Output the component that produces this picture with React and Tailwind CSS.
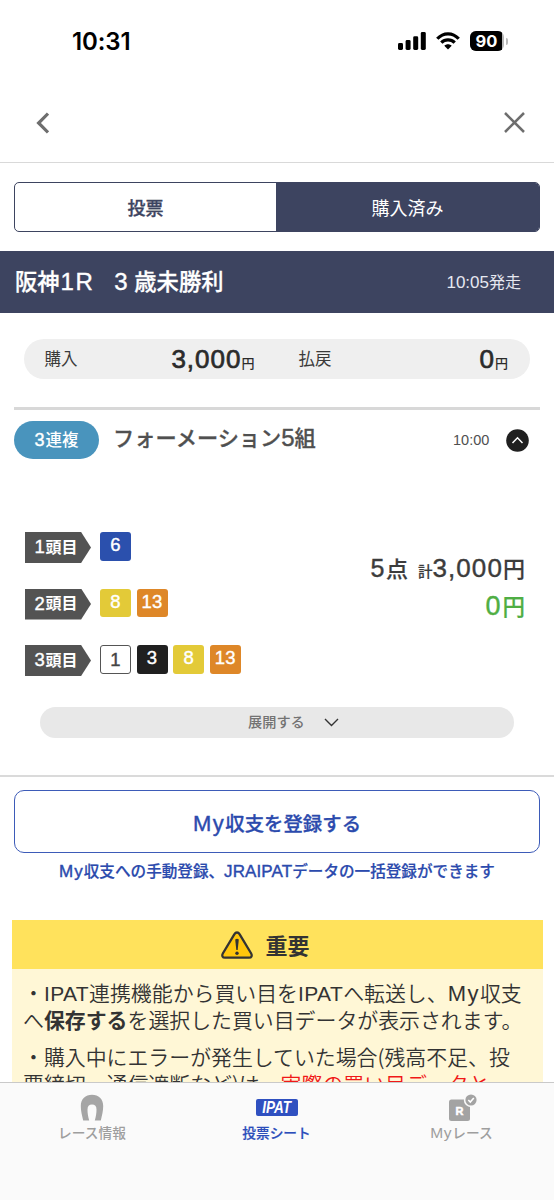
import React from "react";

const SANS = "font-['Liberation_Sans','Noto_Sans_CJK_JP',sans-serif]";

function StatusBar() {
  return (
    <div className="flex h-[82px] items-center justify-between pl-[72px] pr-[46px] text-black">
      <span className="pt-[1px] font-['Inter',sans-serif] text-[24px] font-semibold leading-none tracking-[-0.1px]">10:31</span>
      <div className="flex items-center">
        <svg width="28" height="20" viewBox="0 0 28 20" fill="currentColor">
          <rect x="0" y="12" width="5" height="7" rx="1.4" />
          <rect x="7.6" y="9" width="5" height="10" rx="1.4" />
          <rect x="15.2" y="5.3" width="5" height="13.7" rx="1.4" />
          <rect x="22.8" y="1" width="5" height="18" rx="1.4" />
        </svg>
        <svg className="ml-[10px]" width="24" height="20" viewBox="0 0 24 20" fill="none" stroke="currentColor" strokeWidth="3.2">
          <path d="M1.3 7.8 C7.3 1.1 16.7 1.1 22.7 7.8" />
          <path d="M5.3 11.7 C9 7.9 15 7.9 18.7 11.7" />
          <path d="M8.3 14.8 C10.4 12.8 13.6 12.8 15.7 14.8 L12 18.6 Z" fill="currentColor" stroke="none" />
        </svg>
        <div className="ml-[10px] flex h-5 w-[34px] items-center overflow-hidden rounded-[6px] bg-[#b9b9b9]">
          <div className="flex h-5 w-[32px] items-center justify-center bg-black pl-[1px]">
            <span className="font-['Inter',sans-serif] text-[16.5px] font-bold leading-none text-white">90</span>
          </div>
        </div>
        <div className="ml-[2px] h-[7px] w-[2px] rounded-r bg-[#b9b9b9]" />
      </div>
    </div>
  );
}

function Header() {
  return (
    <div className="flex h-[81px] items-center justify-between border-b-[1.5px] border-[#d9d9d9] pl-[36px] pr-[29px] pt-[1.5px] text-[#6e6e6e]">
      <svg width="13" height="22" viewBox="0 0 13 22" fill="none" stroke="currentColor" strokeWidth="3.2">
        <path d="M12 1.6 L2.600 11 L12 20.400" />
      </svg>
      <svg width="21" height="21" viewBox="0 0 21 21" fill="none" stroke="currentColor" strokeWidth="2.5">
        <path d="M1 1 L20 20 M20 1 L1 20" />
      </svg>
    </div>
  );
}

function Num({ children, className = "" }) {
  return (
    <span className={`font-['Liberation_Sans',sans-serif] font-normal leading-none [-webkit-text-stroke:0.4px_currentColor] ${className}`}>
      {children}
    </span>
  );
}

const COLORS = {
  white: "bg-white border border-[#555] text-[#444] pt-[1px]",
  black: "bg-[#202020] text-white pb-[2px]",
  blue: "bg-[#2b50ad] text-white pb-[2px]",
  yellow: "bg-[#e3ca38] text-white pb-[2px]",
  orange: "bg-[#de8728] text-white pb-[2px]",
};

function Horse({ n, color }) {
  return (
    <span className={`flex h-[28.5px] w-[31px] items-center justify-center rounded-[3px] ${COLORS[color]}`}>
      <Num className="text-[18.5px] tracking-[0.3px]">{n}</Num>
    </span>
  );
}

function Row({ label, horses }) {
  return (
    <div className="flex h-[31px] items-start gap-[9px]">
      <div className="flex h-[31px] w-[66px] items-center bg-[#535353] pl-[9px] text-[16px] leading-none text-white [clip-path:polygon(0_0,85%_0,100%_50%,85%_100%,0_100%)]">
        <Num className="w-[11.5px] text-center text-[18.5px]">{label}</Num>
        <span className="font-bold">頭目</span>
      </div>
      <div className="flex gap-[5.6px]">
        {horses.map(([n, c]) => (
          <Horse key={n} n={n} color={c} />
        ))}
      </div>
    </div>
  );
}

function BottomNav() {
  return (
    <nav className="flex h-[118px] shrink-0 border-t-[1.5px] border-[#c9c9c9] bg-[#fafafa] pt-[11px] text-[13.7px] font-medium leading-none text-[#9e9e9e]">
      <div className="flex w-[184px] flex-col items-center">
        <svg width="24" height="28" viewBox="0 0 24 28" fill="#a5a5a5">
          <path d="M3.2 26.500 C2 21.500 .8 17 .8 12 C.8 5 5.500 .8 12 .8 S23.200 5 23.200 12 C23.200 17 22 21.500 20.800 26.500 H14.800 C16 22.500 16.500 19 16.500 15.500 C16.500 12.200 15 10.500 12 10.500 S7.500 12.200 7.500 15.500 C7.500 19 8 22.500 9.200 26.500 Z" />
        </svg>
        <span className="mt-[5px]">レース情報</span>
      </div>
      <div className="flex w-[185px] flex-col items-center text-[#2b4dba]">
        <div className="mt-[5px] flex h-[17px] w-[42px] items-center justify-center rounded-[2px] bg-[#2f50c0] font-bold italic leading-none text-white">
          <span className="scale-x-[0.82] text-[16.5px]">IPAT</span>
        </div>
        <span className="mt-[11px] [-webkit-text-stroke:0.2px_currentColor]">投票シート</span>
      </div>
      <div className="flex w-[185px] flex-col items-center">
        <svg className="ml-px" width="30" height="28" viewBox="0 0 30 28">
          <rect x="2" y="5.500" width="21" height="21.500" rx="2.500" fill="#a3a3a3" />
          <circle cx="24" cy="6" r="7.200" fill="#fafafa" />
          <circle cx="24" cy="6" r="5.600" fill="#a3a3a3" />
          <path d="M21.300 6 L23.300 8 L26.800 4" fill="none" stroke="#fff" strokeWidth="1.600" />
          <text x="12.500" y="20.500" textAnchor="middle" fill="#fff" stroke="#fff" strokeWidth=".5" fontFamily="Liberation Sans" fontWeight="bold" fontSize="11">R</text>
        </svg>
        <span className="mt-[3px] flex items-baseline"><span className="text-[15.500px] tracking-[0.6px]">My</span>レース</span>
      </div>
    </nav>
  );
}

export default function App() {
  return (
    <div className={`flex h-[1200px] w-[554px] flex-col overflow-hidden bg-white ${SANS}`}>
      <div className="min-h-0 flex-1 overflow-hidden">
        <StatusBar />
        <Header />

        <div className="mx-[14px] mt-[19px] flex h-[50px] overflow-hidden rounded-[5px] border-[1.5px] border-[#3d4460] text-[18px] leading-none">
          <div className="flex w-[261px] items-center justify-center pt-[3px] font-medium text-[#3d4460] [-webkit-text-stroke:0.3px_currentColor]">投票</div>
          <div className="flex flex-1 items-center justify-center bg-[#3d4460] pt-[3px] text-white">購入済み</div>
        </div>

        <div className="mt-[19px] flex h-[62px] items-center justify-between bg-[#3d4460] pl-[15px] pr-[33px] text-white">
          <div className="flex items-baseline text-[22.300px] font-medium leading-none [-webkit-text-stroke:0.3px_currentColor]">
            <span>阪神</span>
            <Num className="ml-[1px] text-[24px] tracking-[1.500px]">1R</Num>
            <Num className="ml-[20px] w-[20px] text-[24px]">3</Num>
            <span>歳未勝利</span>
          </div>
          <div className="flex items-baseline text-[16px] leading-none text-[#e6e8f0]">
            <span className="text-[17px]">10:05</span>発走
          </div>
        </div>

        <div className="ml-[24px] mt-[26px] flex h-[39.500px] w-[506px] items-center rounded-full bg-[#efefef] text-[16.500px] leading-none text-[#3a3a3a]">
          <span className="ml-[20.500px] w-[90px]">購入</span>
          <div className="flex w-[120px] items-baseline justify-end font-medium text-[#2b2b2b]">
            <Num className="text-[26px] tracking-[1px] [-webkit-text-stroke:0.7px_currentColor]">3,000</Num>
            <span className="text-[13px]">円</span>
          </div>
          <span className="ml-[44px] w-[60px]">払戻</span>
          <div className="flex flex-1 items-baseline justify-end pr-[22px] font-medium text-[#2b2b2b]">
            <Num className="text-[26px] tracking-[1px] [-webkit-text-stroke:0.7px_currentColor]">0</Num>
            <span className="text-[13px]">円</span>
          </div>
        </div>

        <div className="mx-[14px] mt-[28.500px] h-[3px] bg-[#d8d8d8]" />

        <div className="ml-[14px] mt-[11px] flex h-[38px] items-center">
          <div className="flex h-[38px] w-[85px] items-center justify-center rounded-full bg-[#4994bd] text-[16.500px] font-medium leading-none text-white">
            <Num className="pr-[1px] text-[18px]">3</Num>連複
          </div>
          <div className="ml-[14px] flex w-[340px] items-baseline pb-[4px] text-[21.200px] font-medium leading-none text-[#505050] [-webkit-text-stroke:0.3px_currentColor]">
            フォーメーション<Num className="text-[24px]">5</Num>組
          </div>
          <span className="w-[53px] text-[14.500px] leading-none text-[#505050]">10:00</span>
          <svg width="23" height="23" viewBox="0 0 23 23">
            <circle cx="11.500" cy="11.500" r="11.300" fill="#202020" />
            <path d="M6.500 14 L11.500 8.800 L16.500 14" fill="none" stroke="#fff" strokeWidth="1.500" />
          </svg>
        </div>

        <div className="mt-[73px] flex h-[144px] justify-between pl-[25px] pr-[29px]">
          <div className="flex flex-col justify-between">
            <Row label="1" horses={[["6", "blue"]]} />
            <Row label="2" horses={[["8", "yellow"], ["13", "orange"]]} />
            <Row label="3" horses={[["1", "white"], ["3", "black"], ["8", "yellow"], ["13", "orange"]]} />
          </div>
          <div className="flex flex-col items-end pt-[23px] font-medium leading-none text-[#3c3c3c]">
            <div className="flex items-baseline text-[22px] [-webkit-text-stroke:0.2px_currentColor]">
              <Num className="text-[25px] tracking-[1.500px]">5</Num>点
              <span className="ml-[10px] text-[14.500px]">計</span>
              <Num className="text-[26px] tracking-[1.100px]">3,000</Num>円
            </div>
            <div className="mt-[12px] flex items-baseline text-[22.500px] text-[#4fae43] [-webkit-text-stroke:0.2px_currentColor]">
              <Num className="text-[27px] tracking-[2px]">0</Num>円
            </div>
          </div>
        </div>

        <div className="ml-[40px] mt-[31px] flex h-[31px] w-[474px] items-center rounded-full bg-[#e8e8e8] pl-[208px] text-[14.200px] font-medium leading-none text-[#737373]">
          <span className="pb-[1px]">展開する</span>
          <svg className="ml-[19px]" width="15" height="9" viewBox="0 0 15 9" fill="none" stroke="#333" strokeWidth="1.400">
            <path d="M1 1 L7.500 7.500 L14 1" />
          </svg>
        </div>

        <div className="mt-[37px] h-[1.500px] bg-[#dadada]" />

        <div className="mx-[14px] mt-[13.500px] flex h-[63px] items-center justify-center rounded-[10px] border-[1.500px] border-[#3d5bb8] pt-[4px] text-[#2b4aad]">
          <div className="flex items-baseline text-[19.400px] font-medium leading-none [-webkit-text-stroke:0.3px_currentColor]">
            <Num className="text-[22px] tracking-[1.500px]">My</Num>収支を登録する
          </div>
        </div>
        <div className="mt-[10px] flex h-[18px] items-baseline justify-center whitespace-nowrap text-[15.600px] font-medium leading-[18px] text-[#2b4aad] [-webkit-text-stroke:0.2px_currentColor]">
          <Num className="text-[17px] tracking-[1px]">My</Num>収支への手動登録、
          <Num className="text-[17px] tracking-[0.1px]">JRAIPAT</Num>データの一括登録ができます
        </div>

        <section className="ml-[11.500px] mt-[39px] h-[200px] w-[531.500px] bg-[#fff7d6] text-[#333]">
          <div className="flex h-[49px] items-center bg-[#ffe25c] pl-[208px]">
            <svg width="34" height="30" viewBox="0 0 34 30">
              <path d="M17 2.500 C18.200 2.500 19 3.200 19.700 4.300 L31.200 23.500 C32.500 25.700 31.500 27.700 29 27.700 H5 C2.500 27.700 1.500 25.700 2.800 23.500 L14.300 4.300 C15 3.200 15.800 2.500 17 2.500 Z" fill="#ffc60b" stroke="#333" strokeWidth="2.300" />
              <path d="M15.200 9.500 Q17 8 18.800 9.500 L17.700 20 H16.300 Z" fill="#333" />
              <circle cx="17" cy="23.200" r="1.700" fill="#333" />
            </svg>
            <span className="ml-[12px] pt-[4px] text-[22px] font-bold leading-none">重要</span>
          </div>
          <div className="flex flex-col gap-[10px] whitespace-nowrap pl-[11.500px] pt-[10px] font-['Noto_Sans_CJK_JP',sans-serif] text-[20.900px] font-[350] leading-[27px]">
            <p className="h-[54px]">
              ・<span className="font-['Liberation_Sans',sans-serif] text-[21px] leading-none tracking-[0.4px]">IPAT</span>連携機能から買い目を<span className="font-['Liberation_Sans',sans-serif] text-[21px] leading-none tracking-[0.4px]">IPAT</span>へ転送し、<span className="font-['Liberation_Sans',sans-serif] text-[22px] leading-none tracking-[1.500px]">My</span>収支
              <br />へ<b className="font-bold">保存する</b>を選択した買い目データが表示されます。
            </p>
            <p>
              ・購入中にエラーが発生していた場合(残高不足、投
              <br />票締切、通信遮断など)は、<span className="text-[#f01818]">実際の買い目データと</span>
            </p>
          </div>
        </section>
      </div>
      <BottomNav />
    </div>
  );
}
